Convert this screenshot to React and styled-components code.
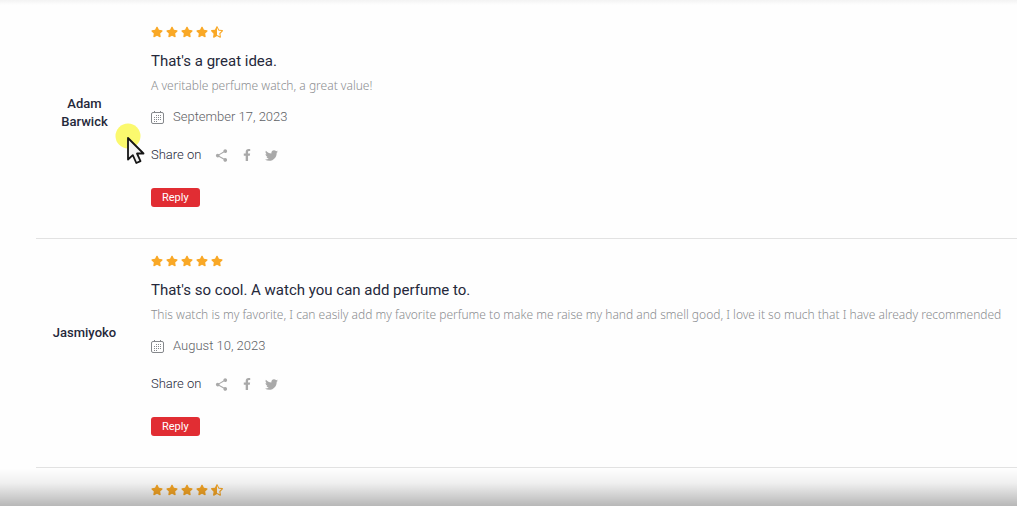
import React from 'react';
import styled, { createGlobalStyle } from 'styled-components';
import { FaFacebookF, FaStar, FaStarHalfAlt, FaTwitter } from 'react-icons/fa';
import { IoMdShare } from 'react-icons/io';

const baseFont = "Roboto, 'Liberation Sans', sans-serif";
const textFont = "'Noto Sans', 'Liberation Sans', sans-serif";

const colors = {
  ink: '#25283a',
  muted: '#8b8d90',
  date: '#5f6266',
  icon: '#a9a9a9',
  star: '#f9a826',
  red: '#e12d33',
  line: '#e2e2e2',
};

const reviews = [
  {
    author: 'Adam Barwick',
    rating: 4.5,
    title: "That's a great idea.",
    text: 'A veritable perfume watch, a great value!',
    date: 'September 17, 2023',
    dateTime: '2023-09-17',
  },
  {
    author: 'Jasmiyoko',
    rating: 5,
    title: "That's so cool. A watch you can add perfume to.",
    text: 'This watch is my favorite, I can easily add my favorite perfume to make me raise my hand and smell good, I love it so much that I have already recommended',
    date: 'August 10, 2023',
    dateTime: '2023-08-10',
  },
  { rating: 4.5 },
];

const shareLinks = [
  { label: 'Share', Icon: IoMdShare, size: 15 },
  { label: 'Facebook', Icon: FaFacebookF, size: 12 },
  { label: 'Twitter', Icon: FaTwitter, size: 13 },
];

const Rating = ({ value }) => (
  <Stars role="img" aria-label={`${value} out of 5`}>
    {[1, 2, 3, 4, 5].map((n) => (n <= value ? <FaStar key={n} /> : <FaStarHalfAlt key={n} />))}
  </Stars>
);

const CalendarIcon = () => (
  <svg width="14" height="14" viewBox="0 0 14 14" fill="none" stroke="#85888c" aria-hidden="true">
    <rect x="0.5" y="2.5" width="12" height="11" rx="1.5" />
    <path d="M3.500 1v2M9.500 1v2" />
    <path d="M5 5.500h6M3 7.500h8M3 9.500h8M3 11.500h4" strokeDasharray="1 1" />
  </svg>
);

const Review = ({ author, rating, title, text, date, dateTime }) => (
  <Item>
    <Author>{author}</Author>
    <div>
      <Rating value={rating} />
      {title && (
        <>
          <Title>{title}</Title>
          <Text>{text}</Text>
          <DateRow>
            <CalendarIcon />
            <time dateTime={dateTime}>{date}</time>
          </DateRow>
          <Share>
            <span>Share on</span>
            {shareLinks.map(({ label, Icon, size }) => (
              <ShareLink key={label} href="#share" aria-label={label}>
                <Icon size={size} />
              </ShareLink>
            ))}
          </Share>
          <ReplyButton type="button">Reply</ReplyButton>
        </>
      )}
    </div>
  </Item>
);

const App = () => (
  <Page>
    <GlobalStyle />
    <List>
      {reviews.map((review, index) => (
        <Review key={index} {...review} />
      ))}
    </List>
    <TopShade />
    <BottomShade />
    <Pointer width="32" height="44" viewBox="0 0 32 44" aria-hidden="true">
      <circle cx="13" cy="13" r="12.5" fill="#fbf96e" />
      <path
        d="M13 15v21.500l4.800-4.300 3.500 7.800 4.200-1.900-3.500-7.600h6.500z"
        fill="#f4f4f4"
        stroke="#151515"
        strokeWidth="1.800"
        strokeLinejoin="round"
      />
    </Pointer>
  </Page>
);

const GlobalStyle = createGlobalStyle`
  body {
    background: #fefefe;
    color: ${colors.ink};
    font-family: ${baseFont};
    margin: 0;
  }
`;

const Page = styled.main`
  box-sizing: border-box;
  height: 100vh;
  overflow: hidden;
  padding: 10px 0 0 36px;
  position: relative;
`;

const List = styled.ul`
  list-style: none;
  margin: 0;
  padding: 0;
`;

const Item = styled.li`
  align-items: start;
  border-bottom: 1px solid ${colors.line};
  column-gap: 18px;
  display: grid;
  grid-template-columns: 97px minmax(0, 1fr);
  padding: 16px 0 31px;
`;

const Author = styled.h3`
  font-size: 13px;
  font-weight: 500;
  line-height: 18px;
  margin: 0;
  padding: 69px 16px 0;
  text-align: center;
`;

const Stars = styled.div`
  color: ${colors.star};
  display: flex;
  font-size: 12px;
  gap: 3px;
  height: 14px;
`;

const Title = styled.h4`
  font-size: 15px;
  font-weight: 400;
  line-height: 20px;
  margin: 11px 0 5px;
`;

const Text = styled.p`
  color: ${colors.muted};
  font-family: ${textFont};
  font-size: 12px;
  font-weight: 300;
  line-height: 20px;
  margin: 0;
  white-space: nowrap;
`;

const DateRow = styled.div`
  align-items: center;
  color: ${colors.date};
  display: flex;
  font-size: 13px;
  font-weight: 300;
  gap: 8px;
  line-height: 20px;
  margin-top: 11px;
`;

const Share = styled.div`
  align-items: center;
  display: flex;
  font-size: 13px;
  font-weight: 300;
  line-height: 20px;
  margin: 18px 0 23px;

  span {
    margin-right: 8px;
  }
`;

const ShareLink = styled.a`
  color: ${colors.icon};
  display: flex;
  justify-content: center;
  width: 25px;
`;

const ReplyButton = styled.button`
  background: ${colors.red};
  border: 0;
  border-radius: 3px;
  color: #fff;
  display: block;
  font: 11px/19px ${baseFont};
  padding: 0 11px;
`;

const TopShade = styled.div`
  background: linear-gradient(#f3f3f3, #fefefe);
  height: 5px;
  left: 0;
  position: absolute;
  right: 0;
  top: 0;
`;

const BottomShade = styled.div`
  background: linear-gradient(rgba(0, 0, 0, 0), rgba(0, 0, 0, 0.06) 40%, rgba(0, 0, 0, 0.28));
  bottom: 0;
  height: 38px;
  left: 0;
  position: absolute;
  right: 0;
`;

const Pointer = styled.svg`
  left: 115px;
  position: absolute;
  top: 123px;
`;

export default App;
